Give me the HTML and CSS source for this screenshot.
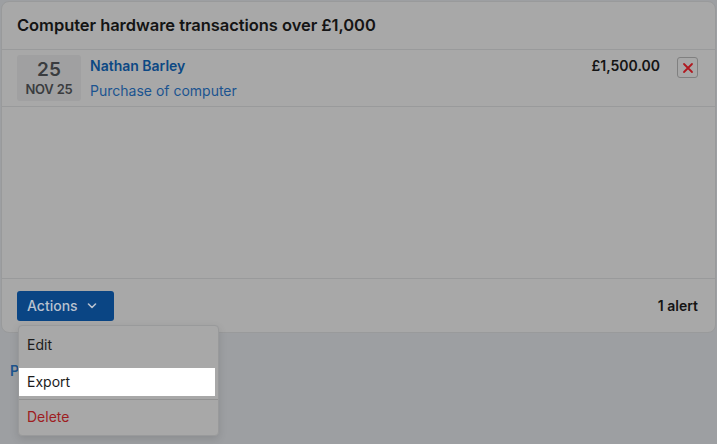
FILE: index.html
```html
<!DOCTYPE html>
<html>
<head>
<meta charset="utf-8">
<link rel="stylesheet" href="styles.css">
</head>
<body>
<div class="page">
  <section class="card">
    <header class="card-head">
      <h2 class="title">Computer hardware transactions over £1,000</h2>
    </header>
    <div class="row">
      <div class="date">
        <span class="day">25</span>
        <span class="month">NOV 25</span>
      </div>
      <div class="info">
        <a class="name">Nathan Barley</a>
        <a class="desc">Purchase of computer</a>
      </div>
      <div class="amount">£1,500.00</div>
      <button class="remove" aria-label="Remove">
        <svg width="12" height="12" viewBox="0 0 12 12"><path d="M2 2 L10 10 M10 2 L2 10" stroke="#b0181f" stroke-width="1.8" stroke-linecap="round"/></svg>
      </button>
    </div>
    <div class="spacer"></div>
    <footer class="card-foot">
      <div class="actions-wrap">
        <button class="actions">Actions
          <svg width="10" height="6" viewBox="0 0 10 6"><path d="M1.5 1 L5 4.5 L8.5 1" fill="none" stroke="#b9c2cf" stroke-width="1.6" stroke-linecap="round" stroke-linejoin="round"/></svg>
        </button>
        <ul class="menu">
          <li class="item first">Edit</li>
          <li class="item active">Export</li>
          <li class="sep"></li>
          <li class="item danger">Delete</li>
        </ul>
      </div>
      <span class="alerts">1 alert</span>
    </footer>
  </section>
  <a class="below">P</a>
</div>
</body>
</html>
```
FILE: styles.css
```css
html, body {
  margin: 0;
  padding: 0;
  background: #9d9fa2;
  font-family: Inter, "Noto Sans", sans-serif;
  color: #141414;
}
.page {
  padding: 1px 1px 0 1px;
  min-height: 443px;
}
.card {
  background: #a8a8a8;
  border: 1px solid #999a9b;
  border-radius: 8px;
  height: 332px;
  display: flex;
  flex-direction: column;
  box-sizing: border-box;
}
.card-head {
  height: 48px;
  box-sizing: border-box;
  padding: 0 15px 1px;
  display: flex;
  align-items: center;
  border-bottom: 1px solid #999a9b;
}
.title {
  margin: 0;
  font-size: 16.5px;
  font-weight: 600;
  letter-spacing: -0.05px;
  color: #141414;
}
.row {
  height: 57px;
  box-sizing: border-box;
  border-bottom: 1px solid #999a9b;
  display: flex;
  align-items: flex-start;
  padding: 5px 17px 0 15px;
}
.date {
  width: 64px;
  height: 46px;
  background: #a0a0a1;
  border-radius: 3px;
  display: flex;
  flex-direction: column;
  align-items: center;
  justify-content: center;
  color: #3a3c3f;
  line-height: 1;
}
.day {
  font-size: 19px;
  font-weight: 600;
  margin-bottom: 4px;
}
.month {
  font-size: 13px;
  font-weight: 600;
  letter-spacing: -0.2px;
}
.info {
  display: flex;
  flex-direction: column;
  margin-left: 9px;
  flex: 1;
}
.name {
  font-size: 14px;
  font-weight: 600;
  color: #0c4884;
  line-height: 20px;
  margin-top: 1px;
}
.desc {
  font-size: 14px;
  color: #1b5490;
  line-height: 20px;
  margin-top: 5px;
}
.amount {
  font-size: 14px;
  font-weight: 600;
  line-height: 20px;
  margin-top: 1px;
  margin-right: 17px;
}
.remove {
  width: 21px;
  height: 21px;
  margin-top: 2px;
  padding: 0;
  border: 1px solid #808080;
  border-radius: 3px;
  background: transparent;
  display: flex;
  align-items: center;
  justify-content: center;
}
.spacer {
  flex: 1;
}
.card-foot {
  height: 54px;
  box-sizing: border-box;
  border-top: 1px solid #999a9b;
  display: flex;
  align-items: center;
  justify-content: space-between;
  padding: 0 17px 0 15px;
}
.actions-wrap {
  position: relative;
}
.actions {
  width: 97px;
  height: 30px;
  border: none;
  border-radius: 3px;
  background: #0a4584;
  color: #b9c2cf;
  font-family: inherit;
  font-size: 14px;
  font-weight: 500;
  display: flex;
  align-items: center;
  gap: 9px;
  padding: 0 0 0 10px;
}
.alerts {
  font-size: 14px;
  font-weight: 600;
}
.menu {
  position: absolute;
  left: 1px;
  top: 34px;
  width: 201px;
  margin: 0;
  padding: 4px 0;
  list-style: none;
  background: #a8a8a8;
  border: 1px solid #999a9b;
  border-radius: 4px;
  box-shadow: 0 3px 8px rgba(0, 0, 0, 0.12);
  box-sizing: border-box;
  z-index: 2;
}
.item {
  height: 28px;
  line-height: 28px;
  padding-left: 8px;
  margin-right: 3px;
  font-size: 14px;
  color: #1c1c1c;
}
.item.first {
  height: 30px;
  line-height: 30px;
  margin-bottom: 8px;
}
.item.active {
  background: #ffffff;
  color: #1c1c1c;
}
.sep {
  height: 1px;
  background: #929292;
  margin: 3px 0 3px;
}
.item.danger {
  color: #9e1d1f;
}
.below {
  display: block;
  margin: 29px 0 0 9px;
  font-size: 14px;
  font-weight: 600;
  color: #1e568f;
}
```
